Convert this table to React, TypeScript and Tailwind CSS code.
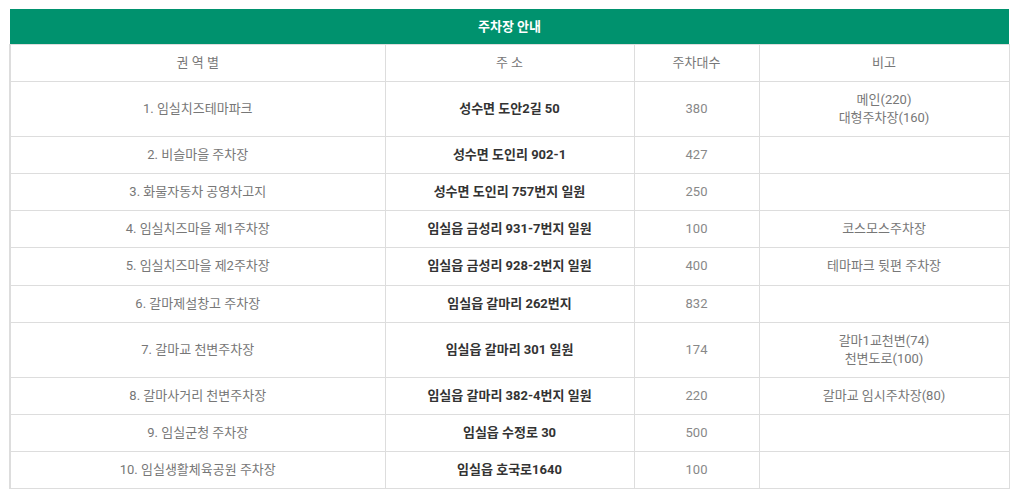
const rows = [
  { name: '1. 임실치즈테마파크', addr: '성수면 도안2길 50', count: '380', note: ['메인(220)', '대형주차장(160)'] },
  { name: '2. 비슬마을 주차장', addr: '성수면 도인리 902-1', count: '427', note: [] },
  { name: '3. 화물자동차 공영차고지', addr: '성수면 도인리 757번지 일원', count: '250', note: [] },
  { name: '4. 임실치즈마을 제1주차장', addr: '임실읍 금성리 931-7번지 일원', count: '100', note: ['코스모스주차장'] },
  { name: '5. 임실치즈마을 제2주차장', addr: '임실읍 금성리 928-2번지 일원', count: '400', note: ['테마파크 뒷편 주차장'], tall: true },
  { name: '6. 갈마제설창고 주차장', addr: '임실읍 갈마리 262번지', count: '832', note: [] },
  { name: '7. 갈마교 천변주차장', addr: '임실읍 갈마리 301 일원', count: '174', note: ['갈마1교천변(74)', '천변도로(100)'] },
  { name: '8. 갈마사거리 천변주차장', addr: '임실읍 갈마리 382-4번지 일원', count: '220', note: ['갈마교 임시주차장(80)'] },
  { name: '9. 임실군청 주차장', addr: '임실읍 수정로 30', count: '500', note: [] },
  { name: '10. 임실생활체육공원 주차장', addr: '임실읍 호국로1640', count: '100', note: [] },
];

export default function App() {
  return (
    <div
      className="bg-white w-[1021px] h-[504px] pt-[9px] pl-[9px]"
      style={{ fontFamily: 'Roboto, "Noto Sans CJK KR", sans-serif' }}
    >
      <table className="w-[999px] border-collapse table-fixed text-[13px] text-center">
        <colgroup>
          <col className="w-[375px]" />
          <col className="w-[249px]" />
          <col className="w-[125px]" />
          <col className="w-[250px]" />
        </colgroup>
        <thead>
          <tr>
            <th colSpan={4} className="h-[35px] bg-[#00926e] text-white font-bold text-[13px]">
              주차장 안내
            </th>
          </tr>
          <tr className="h-[37px] text-[#777] font-normal">
            <th className="font-normal border border-[#ddd] border-l-2">권 역 별</th>
            <th className="font-normal border border-[#ddd]">주 소</th>
            <th className="font-normal border border-[#ddd]">주차대수</th>
            <th className="font-normal border border-[#ddd]">비고</th>
          </tr>
        </thead>
        <tbody>
          {rows.map((r) => (
            <tr
              key={r.name}
              className={r.note.length > 1 ? 'h-[55px]' : r.tall ? 'h-[38px]' : 'h-[37px]'}
            >
              <td className="border border-[#ddd] border-l-2 text-[#777]">{r.name}</td>
              <td className="border border-[#ddd] text-[#333] font-bold">{r.addr}</td>
              <td className="border border-[#ddd] text-[#888]">{r.count}</td>
              <td className="border border-[#ddd] text-[#777] leading-[18px]">
                {r.note.map((n) => (
                  <div key={n}>{n}</div>
                ))}
              </td>
            </tr>
          ))}
        </tbody>
      </table>
    </div>
  );
}
